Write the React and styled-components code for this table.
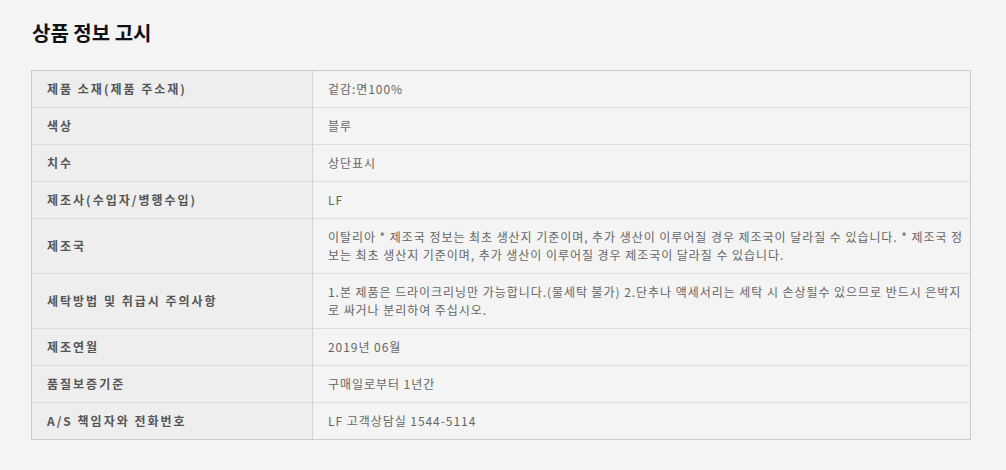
import React from "react";
import styled, { createGlobalStyle } from "styled-components";

const GlobalStyle = createGlobalStyle`
  html, body {
    margin: 0;
    padding: 0;
    background: #f4f4f4;
  }
  body {
    font-family: "Noto Sans CJK KR", "Noto Sans", sans-serif;
  }
`;

const Page = styled.div`
  width: 1006px;
  min-height: 470px;
  box-sizing: border-box;
  padding: 23px 36px 0 31px;
  background: #f4f4f4;
`;

const Title = styled.h2`
  margin: 0 0 0 1px;
  font-size: 20px;
  line-height: 20px;
  font-weight: 700;
  letter-spacing: 0;
  color: #111;
`;

const Table = styled.div`
  margin-top: 27px;
  width: 940px;
  box-sizing: border-box;
  border: 1px solid #cccccc;
  display: flex;
  flex-direction: column;
`;

const Row = styled.div`
  display: grid;
  grid-template-columns: 281px 1fr;
  border-bottom: 1px solid #dddddd;
  &:last-child {
    border-bottom: none;
  }
`;

const Label = styled.div`
  box-sizing: border-box;
  background: #eeeeee;
  border-right: 1px solid #d4d4d4;
  padding: 9px 15px;
  display: flex;
  align-items: center;
  font-size: 12px;
  line-height: 18px;
  font-weight: 700;
  color: #555555;
  letter-spacing: 2px;
`;

const Value = styled.div`
  background: #f4f4f4;
  padding: 9px 3px 9px 15px;
  font-size: 12px;
  line-height: 18px;
  color: #666666;
  letter-spacing: 0.95px;
  word-spacing: 0;
  word-break: break-all;
`;

const rows = [
  ["제품 소재(제품 주소재)", "겉감:면100%"],
  ["색상", "블루"],
  ["치수", "상단표시"],
  ["제조사(수입자/병행수입)", "LF"],
  [
    "제조국",
    "이탈리아 * 제조국 정보는 최초 생산지 기준이며, 추가 생산이 이루어질 경우 제조국이 달라질 수 있습니다. * 제조국 정보는 최초 생산지 기준이며, 추가 생산이 이루어질 경우 제조국이 달라질 수 있습니다.",
  ],
  [
    "세탁방법 및 취급시 주의사항",
    "1.본 제품은 드라이크리닝만 가능합니다.(물세탁 불가) 2.단추나 액세서리는 세탁 시 손상될수 있으므로 반드시 은박지로 싸거나 분리하여 주십시오.",
  ],
  ["제조연월", "2019년 06월"],
  ["품질보증기준", "구매일로부터 1년간"],
  ["A/S 책임자와 전화번호", "LF 고객상담실 1544-5114"],
];

export default function App() {
  return (
    <>
      <GlobalStyle />
      <Page>
        <Title>상품 정보 고시</Title>
        <Table>
          {rows.map(([label, value]) => (
            <Row key={label}>
              <Label>{label}</Label>
              <Value>{value}</Value>
            </Row>
          ))}
        </Table>
      </Page>
    </>
  );
}
